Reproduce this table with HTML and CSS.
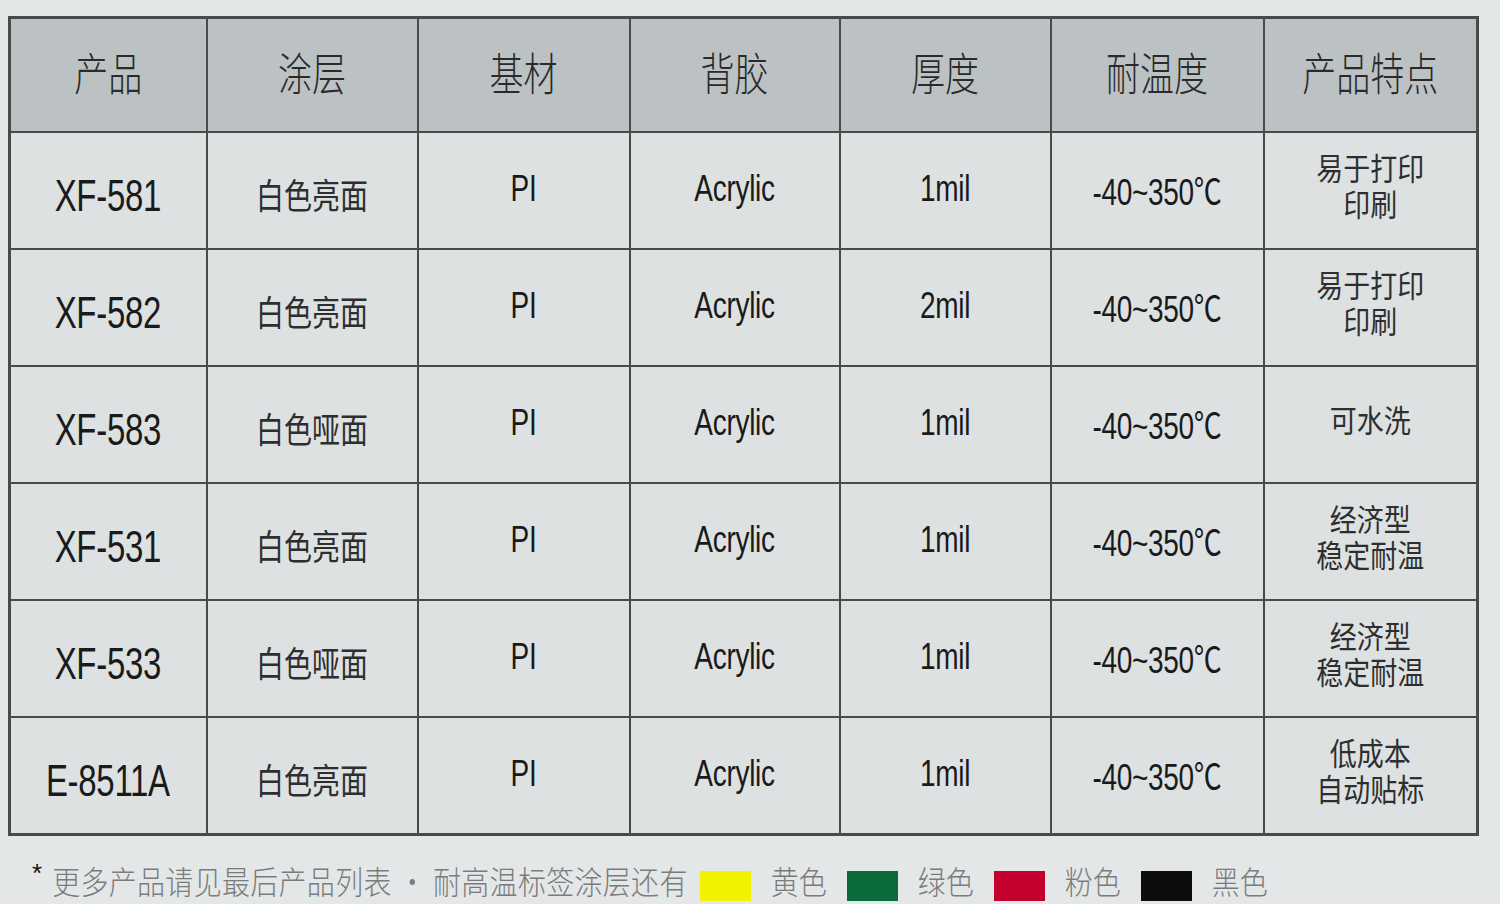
FILE: index.html
```html
<!DOCTYPE html>
<html lang="zh-CN">
<head>
<meta charset="utf-8">
<title>耐高温标签产品表</title>
<link rel="stylesheet" href="styles.css">
</head>
<body>
<div class="page">
  <table class="spec">
    <colgroup>
      <col class="c1"><col class="c2"><col class="c3"><col class="c4"><col class="c5"><col class="c6"><col class="c7">
    </colgroup>
    <thead>
      <tr>
        <th><span class="t">产品</span></th>
        <th><span class="t">涂层</span></th>
        <th><span class="t">基材</span></th>
        <th><span class="t">背胶</span></th>
        <th><span class="t">厚度</span></th>
        <th><span class="t">耐温度</span></th>
        <th><span class="t">产品特点</span></th>
      </tr>
    </thead>
    <tbody>
      <tr>
        <td class="code"><span class="t">XF-581</span></td>
        <td class="cn"><span class="t">白色亮面</span></td>
        <td class="lat"><span class="t">PI</span></td>
        <td class="lat"><span class="t">Acrylic</span></td>
        <td class="lat"><span class="t">1mil</span></td>
        <td class="lat"><span class="t">-40~350℃</span></td>
        <td class="feat"><span class="t">易于打印</span><span class="t">印刷</span></td>
      </tr>
      <tr>
        <td class="code"><span class="t">XF-582</span></td>
        <td class="cn"><span class="t">白色亮面</span></td>
        <td class="lat"><span class="t">PI</span></td>
        <td class="lat"><span class="t">Acrylic</span></td>
        <td class="lat"><span class="t">2mil</span></td>
        <td class="lat"><span class="t">-40~350℃</span></td>
        <td class="feat"><span class="t">易于打印</span><span class="t">印刷</span></td>
      </tr>
      <tr>
        <td class="code"><span class="t">XF-583</span></td>
        <td class="cn"><span class="t">白色哑面</span></td>
        <td class="lat"><span class="t">PI</span></td>
        <td class="lat"><span class="t">Acrylic</span></td>
        <td class="lat"><span class="t">1mil</span></td>
        <td class="lat"><span class="t">-40~350℃</span></td>
        <td class="feat"><span class="t">可水洗</span></td>
      </tr>
      <tr>
        <td class="code"><span class="t">XF-531</span></td>
        <td class="cn"><span class="t">白色亮面</span></td>
        <td class="lat"><span class="t">PI</span></td>
        <td class="lat"><span class="t">Acrylic</span></td>
        <td class="lat"><span class="t">1mil</span></td>
        <td class="lat"><span class="t">-40~350℃</span></td>
        <td class="feat"><span class="t">经济型</span><span class="t">稳定耐温</span></td>
      </tr>
      <tr>
        <td class="code"><span class="t">XF-533</span></td>
        <td class="cn"><span class="t">白色哑面</span></td>
        <td class="lat"><span class="t">PI</span></td>
        <td class="lat"><span class="t">Acrylic</span></td>
        <td class="lat"><span class="t">1mil</span></td>
        <td class="lat"><span class="t">-40~350℃</span></td>
        <td class="feat"><span class="t">经济型</span><span class="t">稳定耐温</span></td>
      </tr>
      <tr>
        <td class="code"><span class="t">E-8511A</span></td>
        <td class="cn"><span class="t">白色亮面</span></td>
        <td class="lat"><span class="t">PI</span></td>
        <td class="lat"><span class="t">Acrylic</span></td>
        <td class="lat"><span class="t">1mil</span></td>
        <td class="lat"><span class="t">-40~350℃</span></td>
        <td class="feat"><span class="t">低成本</span><span class="t">自动贴标</span></td>
      </tr>
    </tbody>
  </table>
  <p class="note">
    <span class="star">*</span>
    <span class="ntext">更多产品请见最后产品列表 · 耐高温标签涂层还有</span>
    <span class="sw yellow"></span><span class="ntext lbl">黄色</span>
    <span class="sw green"></span><span class="ntext lbl">绿色</span>
    <span class="sw red"></span><span class="ntext lbl">粉色</span>
    <span class="sw black"></span><span class="ntext lbl">黑色</span>
  </p>
</div>
</body>
</html>
```

FILE: styles.css
```css
html, body {
  margin: 0;
  padding: 0;
}
body {
  background: #e4e7e8;
  width: 1500px;
  height: 904px;
  overflow: hidden;
  font-family: "Liberation Sans", "Noto Sans CJK SC", sans-serif;
  color: #1e1e1e;
}
.page {
  padding: 16px 0 0 8px;
}
.spec {
  border-collapse: collapse;
  table-layout: fixed;
  width: 1468px;
  border: 3px solid #4a4a4a;
}
.c1 { width: 197px; }
.c2 { width: 211px; }
.c3 { width: 212px; }
.c4 { width: 210px; }
.c5 { width: 211px; }
.c6 { width: 213px; }
.c7 { width: 214px; }

.spec th, .spec td {
  border: 2.5px solid #4a4a4a;
  text-align: center;
  vertical-align: middle;
  padding: 0;
}
.spec th {
  background: #bcc2c4;
  height: 112px;
  font-family: "Noto Sans CJK SC", sans-serif;
  font-weight: 300;
  font-size: 34px;
  color: #2a2a2a;
}
.spec th .t {
  transform: translateY(-4px) scaleY(1.32);
}
.spec td {
  background: #dde1e2;
  height: 115px;
}
.t {
  display: inline-block;
  transform: scaleY(1.3);
}
.code {
  font-size: 34px;
  letter-spacing: -0.3px;
  color: #1a1a1a;
}
.code .t {
  transform: translateY(6px) scale(0.97, 1.3);
}
.cn {
  font-family: "Noto Sans CJK SC", sans-serif;
  font-weight: 400;
  font-size: 28px;
  color: #2e2e2e;
}
.cn .t {
  transform: translateY(3px) scaleY(1.25);
}
.lat {
  font-size: 28px;
  letter-spacing: -0.3px;
  color: #1a1a1a;
}
.lat .t {
  transform: translateY(-2px) scaleY(1.3);
}
.feat {
  font-family: "Noto Sans CJK SC", sans-serif;
  font-weight: 400;
  font-size: 27px;
  line-height: 30px;
  color: #2e2e2e;
}
.feat .t {
  display: block;
  margin: 6px 0;
  transform: translateY(-6px) scaleY(1.15);
}
.note {
  margin: 24px 0 0 0;
  padding-left: 24px;
  display: flex;
  align-items: center;
  height: 40px;
  font-family: "Noto Sans CJK SC", sans-serif;
  font-weight: 300;
  color: #7a7c7c;
  font-size: 28px;
}
.star {
  color: #111;
  font-family: "Liberation Sans", sans-serif;
  font-size: 26px;
  align-self: flex-start;
  margin-right: 10px;
  margin-top: -2px;
}
.ntext {
  display: inline-block;
  transform: scaleY(1.15);
  white-space: nowrap;
  letter-spacing: 0.3px;
}
.lbl {
  margin: 0 20px 0 20px;
  letter-spacing: 0;
}
.sw {
  display: inline-block;
  width: 51px;
  height: 30px;
  margin-top: 12px;
}
.yellow { background: #f2f200; margin-left: 12px; }
.green { background: #0c6b3a; }
.red { background: #c4002e; }
.black { background: #0d0d0b; }
```
